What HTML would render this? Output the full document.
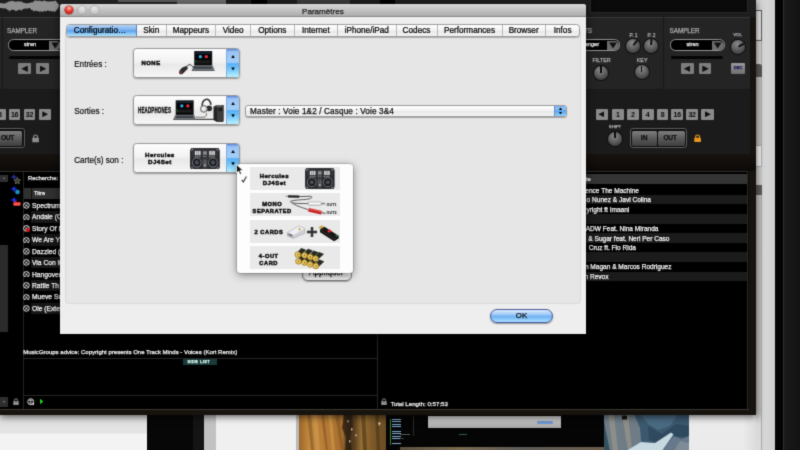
<!DOCTYPE html>
<html><head><meta charset="utf-8">
<style>
*{box-sizing:border-box;margin:0;padding:0}
html,body{width:800px;height:450px;overflow:hidden;background:#000;font-family:"Liberation Sans",sans-serif;}
.a{position:absolute}
.t{position:absolute;white-space:nowrap;line-height:1;-webkit-text-stroke-width:.25px}
#root{position:absolute;left:0;top:0;width:800px;height:450px;overflow:hidden;background:#000;filter:url(#gb)}
#app{left:0;top:0;width:755.5px;height:415.3px;background:#17130f;overflow:hidden;box-shadow:0 2px 7px rgba(0,0,0,.6)}
.lb{color:#ababab;font-size:6.3px;}
.knob{position:absolute;width:14px;height:14px;border-radius:50%;background:radial-gradient(circle at 45% 30%,#8a8a8a 0%,#555 55%,#2a2a2a 100%);box-shadow:0 0 0 1px #0e0e0e}
.knob i{position:absolute;left:6.2px;top:0.3px;width:1.7px;height:6.4px;background:#0c0c0c;transform-origin:50% 6.7px}
.sq{position:absolute;height:11px;width:11.8px;background:#8a8a8a;color:#0a0a0a;font-size:7px;font-weight:bold;text-align:center;line-height:11.6px;border-radius:1px;letter-spacing:-.2px}
.rt{color:#f2f2f2}
#dlg{left:60px;top:4px;width:526.2px;height:329.6px;background:#eeeeee;box-shadow:0 3px 10px rgba(0,0,0,.6);border-radius:3px 3px 0 0;overflow:hidden}
#tb{left:0;top:0;width:527px;height:12.8px;background:linear-gradient(#d8d8d8,#acacac);border-bottom:1px solid #8a8a8a}
.tl{position:absolute;top:2.1px;width:8.2px;height:8.2px;border-radius:50%}
.tab{position:absolute;top:0;height:100%;font-size:8.2px;color:#000;-webkit-text-stroke:.22px #000;text-align:center;line-height:12px;border-right:1px solid #b8b8b8;white-space:nowrap}
.dd{position:absolute;left:72.9px;width:107px;height:30px;border:1px solid #999;border-radius:3.5px;background:linear-gradient(#fdfdfd,#f2f2f2 45%,#e8e8e8 55%,#f6f6f6);box-shadow:0 1px 1.5px rgba(0,0,0,.35);overflow:hidden}
.dd .ar{position:absolute;right:0;top:0;width:13px;height:100%;background:linear-gradient(#5a84d4 0,#9ac4f4 10%,#a2cef8 47%,#56b0f6 53%,#7cccfc 76%,#bcf0ff 100%);border-left:1px solid #86aee0}
.up{position:absolute;left:3.7px;width:0;height:0;border-left:2.4px solid transparent;border-right:2.4px solid transparent}
.dl{position:absolute;color:#111;-webkit-text-stroke:.2px #111;font-size:8.15px;left:14.2px;white-space:nowrap;line-height:1}
.blk{position:absolute;font-weight:bold;color:#111;white-space:nowrap;line-height:1;text-align:center}
.mi{position:absolute;left:12.5px;width:90px;height:23.3px;background:#e9e9e9}
</style></head><body><svg width="0" height="0" style="position:absolute"><filter id="gb" x="0" y="0" width="100%" height="100%" color-interpolation-filters="sRGB"><feConvolveMatrix order="3" kernelMatrix="1 5 1 5 25 5 1 5 1" divisor="49" edgeMode="duplicate" preserveAlpha="true"/></filter></svg><div id="root">
<div class="a" style="left:755px;top:0;width:20px;height:450px;background:linear-gradient(90deg,#cfcfcf,#d6d6d6 60%,#cdcdcd)"></div>
<div class="a" style="left:755px;top:77px;width:6.5px;height:373px;background:linear-gradient(#bcbcbc 0,#bcbcbc 90%,#d8d8d8 93%,#dcdcdc 100%)"></div>
<div class="a" style="left:761.3px;top:40px;width:1px;height:410px;background:#a8a8a8"></div>
<div class="a" style="left:755px;top:10px;width:7.2px;height:30.7px;background:#e2e2e2;border:1px solid #5a5a5a;border-left:0"></div>
<div class="a" style="left:755px;top:64px;width:6.8px;height:13px;background:#565656;border-radius:0 3px 0 0"></div>
<div class="a" style="left:755px;top:145px;width:6.8px;height:22px;background:#ececec;border:1px solid #aaa;border-left:0"></div>
<div class="a" style="left:755px;top:167px;width:6.5px;height:18px;background:#c8c8c8"></div>
<div class="a" style="left:755px;top:185px;width:6.5px;height:10px;background:#5a5a5a"></div>
<div class="a" style="left:775px;top:0;width:25px;height:450px;background:#040404"></div>
<div class="a" style="left:783px;top:0;width:17px;height:450px;background:linear-gradient(90deg,#1a1a1a,#121212);border-left:1px solid #2a3232"></div>
<div class="a" style="left:0;top:410px;width:147px;height:40px;background:linear-gradient(#dcdcdc 0,#e2e2e2 40%,#e5e5e5 58%,#f3f3f3 60%,#f3f3f3 100%)"></div>
<div class="a" style="left:147px;top:410px;width:57px;height:40px;background:#070707"></div>
<div class="a" style="left:193px;top:410px;width:11px;height:40px;background:#141414"></div>
<div class="a" style="left:204px;top:410px;width:12px;height:40px;background:#c2c2c2"></div>
<div class="a" style="left:216px;top:410px;width:81px;height:40px;background:#f0f0f0"></div>
<div class="a" style="left:296px;top:410px;width:3.3px;height:40px;background:#b8b8b8"></div>
<svg class="a" style="left:299.3px;top:414px;filter:blur(.5px)" width="87" height="37" viewBox="0 0 87 37"><defs><linearGradient id="rk" x1="0" x2="1" y1="0" y2="0"><stop offset="0" stop-color="#9a6628"/><stop offset=".12" stop-color="#c48a40"/><stop offset=".3" stop-color="#b67a34"/><stop offset=".5" stop-color="#a8702e"/><stop offset=".56" stop-color="#3e2c18"/><stop offset=".64" stop-color="#5a4022"/><stop offset=".72" stop-color="#9a7034"/><stop offset=".85" stop-color="#7a5828"/><stop offset="1" stop-color="#6a4c24"/></linearGradient></defs><rect width="87" height="37" fill="url(#rk)"/><path d="M8 0l4 37h3L12 0zM22 0l5 37h2L25 0zM36 0l6 37h3L40 0z" fill="#7a5224" opacity=".55"/><path d="M14 0l3 37h4L18 0zM29 0l4 37h3L33 0z" fill="#d4a258" opacity=".5"/><path d="M45 0l-2 14 4 10-1 13h7l-2-14 3-10-1-13z" fill="#2e2012" opacity=".8"/><path d="M62 0l2 37h4L66 0zM76 0l2 37h3L80 0z" fill="#4a3418" opacity=".6"/><path d="M48 6l2 1-1 2zM52 14l2 1-2 2zM56 20l2 1-1 2zM79 8l3 1-2 3zM50 26l2 1-2 2z" fill="#e8e0d0" opacity=".8"/></svg>
<div class="a" style="left:386px;top:410px;width:219px;height:40px;background:#050505"></div>
<div class="a" style="left:391.5px;top:418.5px;width:9px;height:26.5px;background:repeating-linear-gradient(#7fa6c8 0 .9px,#06080c .9px 2.4px)"></div>
<div class="a" style="left:390px;top:418.5px;width:1px;height:26.5px;background:#3a7a2a"></div>
<div class="a" style="left:413px;top:416px;width:1px;height:20px;background:#2a2a2a"></div>
<div class="a" style="left:428px;top:416px;width:133px;height:11.5px;background:linear-gradient(#d2d2d2,#a6a6a6)"></div>
<div class="a" style="left:537px;top:421.3px;width:15.5px;height:2.4px;border-radius:1.2px;background:#6c98d2"></div>
<div class="a" style="left:459px;top:433.5px;width:7.5px;height:1.5px;background:#2a5a5c"></div>
<div class="a" style="left:400px;top:433.5px;width:10px;height:1px;background:#555"></div>
<div class="a" style="left:400px;top:437.5px;width:4px;height:1px;background:#444"></div>
<div class="a" style="left:400px;top:446.5px;width:205px;height:3.5px;background:linear-gradient(90deg,#5a5040,#7a6a50 30%,#5c5a58 60%,#6a5c48)"></div>
<svg class="a" style="left:604.3px;top:414px;filter:blur(.5px)" width="85" height="37" viewBox="0 0 85 37"><rect width="85" height="37" fill="#3c586e"/><path d="M0 0h30l6 14 2 23H0z" fill="#6f7c86"/><path d="M4 0l5 37h5L10 0zM18 0l6 37h4L24 0z" fill="#98958a" opacity=".7"/><path d="M0 8l6 29H0z" fill="#34505f"/><path d="M36 0l8 10 10 6 12-4 8-12z" fill="#4a6a82"/><path d="M44 12l14 8 14-10 13 2v12l-14-2-12 8-14-4z" fill="#2f4a5e"/><path d="M22 37l15-9 14 1 16-10.5 2.5 2L58 37z" fill="#c6d8e0"/><path d="M58 37l11.5-15 8 3 7.5-3v15z" fill="#66788a"/><path d="M70 37l6-10 9 2v8z" fill="#8a949a" opacity=".7"/><rect x="18" y="1.5" width="5" height="4" fill="#111"/></svg>
<div class="a" style="left:689.3px;top:410px;width:67px;height:40px;background:linear-gradient(90deg,#ebebeb 0,#ebebeb 80%,#dcdcdc 100%)"></div>
<div id="app" class="a">
<div class="a" style="left:0;top:0;width:756px;height:16.5px;background:#1d1d1d"></div>
<svg class="a" style="left:0;top:0" width="64" height="12" viewBox="0 0 64 12"><path d="M0 3.3 L1.2 3.1 L2.4 3.2 L3.6 3.5 L4.8 3.5 L6 2.8 L7.2 2.5 L8.4 1.8 L9.6 1.2 L10.8 1.3 L12 0.8 L13.2 0.9 L14.4 1.8 L15.6 1.6 L16.8 1.7 L18 1.2 L19.2 1.3 L20.4 1.9 L21.6 1.1 L22.8 2.8 L24 2.7 L25.2 3 L26.4 3.4 L27.6 3.2 L28.8 3 L30 2.9 L31.2 2.2 L32.4 2.4 L33.6 1.6 L34.8 0.6 L36 0.5 L37.2 0.7 L38.4 0.9 L39.6 0.6 L40.8 1 L42 1.5 L43.2 0.8 L44.4 0.6 L45.6 1.1 L46.8 1.6 L48 1.4 L49.2 1.5 L50.4 1.4 L51.6 1.1 L52.8 1.5 L54 0.9 L55.2 0.6 L56.4 1.7 L57.6 3.2 L58.8 4.6 L58.8 6.5 L57.6 9 L56.4 10.2 L55.2 11.8 L54 11.8 L52.8 10.9 L51.6 11.8 L50.4 10.4 L49.2 11.6 L48 10.1 L46.8 10.9 L45.6 11.4 L44.4 10.5 L43.2 12.1 L42 11.4 L40.8 11.3 L39.6 12 L38.4 10.9 L37.2 11.2 L36 10.6 L34.8 11.1 L33.6 11.4 L32.4 9.7 L31.2 10.1 L30 7.9 L28.8 8.1 L27.6 8.8 L26.4 8.5 L25.2 8.6 L24 8.8 L22.8 9.2 L21.6 10.4 L20.4 9.9 L19.2 9.6 L18 10.3 L16.8 10.7 L15.6 11.2 L14.4 9.8 L13.2 10.1 L12 9.6 L10.8 10.3 L9.6 11.5 L8.4 10 L7.2 9.8 L6 8.6 L4.8 8.3 L3.6 8.4 L2.4 8.2 L1.2 7.9 L0 8Z" fill="#8e8e8e"/></svg>
<div class="a" style="left:60px;top:0;width:166px;height:4px;background:#242424"></div>
<div class="a" style="left:118px;top:0;width:60px;height:1.5px;background:#5a5a5a"></div>
<div class="a" style="left:177px;top:0;width:49px;height:3.6px;background:#6a6a6a"></div>
<div class="a" style="left:251px;top:0;width:16px;height:4px;background:#000"></div>
<div class="a" style="left:297px;top:0;width:53px;height:4px;background:#3a3a3a"></div>
<div class="a" style="left:380px;top:0;width:15px;height:4px;background:#000"></div>
<div class="a" style="left:590px;top:0;width:158px;height:12.5px;background:#0a0a0a;border:1px solid #262626;border-top:0"></div>
<div class="a" style="left:0;top:16.5px;width:749.5px;height:137.5px;background:#242424;border-top:1px solid #383838"></div>
<div class="a" style="left:0;top:89px;width:749.5px;height:1px;background:#191919"></div>
<div class="a" style="left:0;top:90px;width:749.5px;height:64px;background:#1b1b1b"></div>
<div class="a" style="left:0;top:153.5px;width:749.5px;height:1px;background:#3a3a3a"></div>
<div class="a" style="left:663px;top:17px;width:1px;height:72px;background:#191919"></div>
<div class="a" style="left:2px;top:17px;width:1px;height:72px;background:#191919"></div>
<div class="a" style="left:0;top:154px;width:756px;height:17px;background:linear-gradient(#17130f,#0c0a08)"></div>
<div class="t lb" style="left:7px;top:27.8px">SAMPLER</div>
<div class="a" style="left:7.5px;top:39.3px;width:60px;height:11.8px;background:#000;border:1.1px solid #939393;border-radius:5.5px"></div>
<div class="t" style="left:24px;top:42.3px;color:#f0f0f0;font-size:5.6px">siren</div>
<div class="a" style="left:49px;top:40.5px;width:12.2px;height:9.5px;background:#6c6c6c;border-radius:0 4.5px 4.5px 0"></div>
<div class="a" style="left:51.3px;top:42.4px;width:7.8px;height:6.2px;background:#111;clip-path:polygon(0 0,100% 0,50% 100%)"></div>
<div class="a" style="left:8.5px;top:55.8px;width:51.5px;height:3.6px;background:#050505;border-radius:1.8px"></div>
<div class="a" style="left:18.4px;top:63.3px;width:12.8px;height:11px;background:#7d7d7d;border-radius:1px"></div>
<div class="a" style="left:21.3px;top:65.5px;width:6.5px;height:6.6px;background:#111;clip-path:polygon(100% 0,100% 100%,0 50%)"></div>
<div class="a" style="left:36.1px;top:63.3px;width:12.8px;height:11px;background:#7d7d7d;border-radius:1px"></div>
<div class="a" style="left:39.8px;top:65.5px;width:6.5px;height:6.6px;background:#111;clip-path:polygon(0 0,0 100%,100% 50%)"></div>
<div class="t lb" style="left:669.5px;top:27.8px">SAMPLER</div>
<div class="a" style="left:670px;top:39.3px;width:54.5px;height:11.8px;background:#000;border:1.1px solid #939393;border-radius:5.5px"></div>
<div class="t" style="left:686.5px;top:42.3px;color:#f0f0f0;font-size:5.6px">siren</div>
<div class="a" style="left:711.5px;top:40.5px;width:12.2px;height:9.5px;background:#6c6c6c;border-radius:0 4.5px 4.5px 0"></div>
<div class="a" style="left:713.8px;top:42.4px;width:7.8px;height:6.2px;background:#111;clip-path:polygon(0 0,100% 0,50% 100%)"></div>
<div class="a" style="left:671px;top:55.8px;width:51.5px;height:3.6px;background:#050505;border-radius:1.8px"></div>
<div class="a" style="left:680.9px;top:63.3px;width:12.8px;height:11px;background:#7d7d7d;border-radius:1px"></div>
<div class="a" style="left:683.8px;top:65.5px;width:6.5px;height:6.6px;background:#111;clip-path:polygon(100% 0,100% 100%,0 50%)"></div>
<div class="a" style="left:698.6px;top:63.3px;width:12.8px;height:11px;background:#7d7d7d;border-radius:1px"></div>
<div class="a" style="left:702.3px;top:65.5px;width:6.5px;height:6.6px;background:#111;clip-path:polygon(0 0,0 100%,100% 50%)"></div>
<div class="sq" style="left:-6px;top:108.7px">8</div>
<div class="sq" style="left:8.7px;top:108.7px">16</div>
<div class="sq" style="left:23.6px;top:108.7px">32</div>
<div class="sq" style="left:38.7px;top:108.7px;width:12.2px"></div>
<div class="a" style="left:42.300000000000004px;top:111.2px;width:5.8px;height:6px;background:#111;clip-path:polygon(0 0,0 100%,100% 50%)"></div>
<div class="sq" style="left:595.6px;top:108.7px;width:12.2px"></div>
<div class="a" style="left:598.4px;top:111.2px;width:5.8px;height:6px;background:#111;clip-path:polygon(100% 0,100% 100%,0 50%)"></div>
<div class="sq" style="left:612px;top:108.7px">1</div>
<div class="sq" style="left:627px;top:108.7px">2</div>
<div class="sq" style="left:641.8px;top:108.7px">4</div>
<div class="sq" style="left:656.7px;top:108.7px">8</div>
<div class="sq" style="left:671.4px;top:108.7px">16</div>
<div class="sq" style="left:686.2px;top:108.7px">32</div>
<div class="sq" style="left:701.4px;top:108.7px;width:12.2px"></div>
<div class="a" style="left:705px;top:111.2px;width:5.8px;height:6px;background:#111;clip-path:polygon(0 0,0 100%,100% 50%)"></div>
<div class="a" style="left:-33px;top:128px;width:57.5px;height:20px;border:1px solid #5a5a5a;border-radius:3px;background:#101010"></div>
<div class="a" style="left:-30.5px;top:130.5px;width:25.3px;height:15px;background:linear-gradient(#7e7e7e,#5a5a5a 50%,#3e3e3e);border-radius:1.5px"></div>
<div class="a" style="left:-4.5px;top:130.5px;width:26.5px;height:15px;background:linear-gradient(#7e7e7e,#5a5a5a 50%,#3e3e3e);border-radius:1.5px"></div>
<div class="t" style="left:-21.700000000000045px;top:134.8px;color:#111;font-size:6.6px;font-weight:bold">IN</div>
<div class="t" style="left:1.1000000000000227px;top:134.8px;color:#111;font-size:6.6px;font-weight:bold;letter-spacing:-.35px">OUT</div>
<div class="a" style="left:629.5px;top:128px;width:57.5px;height:20px;border:1px solid #5a5a5a;border-radius:3px;background:#101010"></div>
<div class="a" style="left:632px;top:130.5px;width:25.3px;height:15px;background:linear-gradient(#7e7e7e,#5a5a5a 50%,#3e3e3e);border-radius:1.5px"></div>
<div class="a" style="left:658px;top:130.5px;width:26.5px;height:15px;background:linear-gradient(#7e7e7e,#5a5a5a 50%,#3e3e3e);border-radius:1.5px"></div>
<div class="t" style="left:640.8px;top:134.8px;color:#111;font-size:6.6px;font-weight:bold">IN</div>
<div class="t" style="left:663.6px;top:134.8px;color:#111;font-size:6.6px;font-weight:bold;letter-spacing:-.35px">OUT</div>
<svg class="a" style="left:32px;top:134px" width="7.2" height="8.6" viewBox="0 0 15 18"><path d="M3.5 8.5V6a4 4 0 0 1 8 0v2.5" fill="none" stroke="#8e8e8e" stroke-width="2.4"/><rect x="0.5" y="8" width="14" height="9.5" rx="1" fill="#8e8e8e"/></svg>
<svg class="a" style="left:694.2px;top:133.8px" width="7.2" height="8.6" viewBox="0 0 15 18"><path d="M3.5 8.5V6a4 4 0 0 1 8 0v2.5" fill="none" stroke="#ea951e" stroke-width="2.4"/><rect x="0.5" y="8" width="14" height="9.5" rx="1" fill="#ea951e"/></svg>
<div class="t lb" style="right:163.5px;top:27.8px">ECTS</div>
<div class="a" style="left:566px;top:39.3px;width:54px;height:11.8px;background:#000;border:1.1px solid #939393;border-radius:5.5px"></div>
<div class="t" style="right:156.5px;top:42.3px;color:#f0f0f0;font-size:5.6px">anger</div>
<div class="a" style="left:606.8px;top:40.5px;width:12.2px;height:9.5px;background:#6c6c6c;border-radius:0 4.5px 4.5px 0"></div>
<div class="a" style="left:609.1px;top:42.4px;width:7.8px;height:6.2px;background:#111;clip-path:polygon(0 0,100% 0,50% 100%)"></div>
<div class="t lb" style="left:629.5px;top:33.6px;font-size:4.9px">P. 1</div>
<div class="t lb" style="left:647.5px;top:33.6px;font-size:4.9px">P. 2</div>
<div class="knob" style="left:626px;top:38.8px"><i style="transform:rotate(38deg)"></i></div>
<div class="knob" style="left:644px;top:38.8px"><i style="transform:rotate(5deg)"></i></div>
<div class="t lb" style="left:592.5px;top:58.3px;font-size:5.4px">FILTER</div>
<div class="knob" style="left:594px;top:66px"><i></i></div>
<div class="t lb" style="left:636.7px;top:58.3px;font-size:5.4px">KEY</div>
<div class="knob" style="left:634.6px;top:65.3px"><i></i></div>
<div class="t lb" style="left:733.2px;top:33.4px;font-size:4.4px">VOL</div>
<div class="knob" style="left:731px;top:39.8px"><i style="transform:rotate(62deg)"></i></div>
<div class="a" style="left:731px;top:62.5px;width:13.5px;height:11.3px;background:linear-gradient(#9a9a9a,#707070);border-radius:1px"></div>
<div class="t" style="left:733.8px;top:66.2px;color:#1a1a60;font-size:4.2px;font-weight:bold">DEC</div>
<div class="t lb" style="left:608.8px;top:125px;font-size:4.3px">SHIFT</div>
<div class="knob" style="left:608px;top:131.7px"><i></i></div>
<div class="a" style="left:0;top:170.5px;width:749px;height:238.5px;background:#000;border-top:1px solid #2e2e2e"></div>
<div class="a" style="left:0;top:174.5px;width:8px;height:7px;background:#2f2f2f"></div>
<div class="a" style="left:2.6px;top:177.2px;width:3px;height:2.2px;background:#777;clip-path:polygon(0 100%,100% 100%,50% 0)"></div>
<div class="a" style="left:0;top:245px;width:8px;height:86.5px;background:#2b2b2b"></div>
<svg class="a" style="left:9.5px;top:172.5px" width="12" height="35" viewBox="0 0 24 70"><path d="M14.5 9 l2 4.2 4.5 .6 -3.3 3.2 .8 4.5 -4-2.2 -4 2.2 .8-4.5 -3.3-3.2 4.5-.6z" fill="#3a3a30" stroke="#8c8878" stroke-width="1.3"/><path d="M8 3v10M3 8h10" stroke="#28309a" stroke-width="2.8"/><circle cx="15" cy="38" r="4.6" fill="#1f9fd0"/><path d="M12 36q3 2 6-1M13 41q2-3 5-1" stroke="#0b5a86" stroke-width="1" fill="none"/><path d="M8 27v10M3 32h10" stroke="#1d35ff" stroke-width="2.8"/><path d="M7 56h5l1.5 2H21v7H7z" fill="#e02222"/><path d="M7 60h14l-1 5H7z" fill="#ff5a4a"/><path d="M8 49v10M3 54h10" stroke="#1d35ff" stroke-width="2.8"/></svg>
<div class="a" style="left:22.5px;top:171.5px;width:1px;height:237px;background:#242424"></div>
<div class="t" style="left:28px;top:176.4px;color:#f0f0f0;font-size:5.9px">Recherche:</div>
<div class="a" style="left:24px;top:188px;width:40px;height:11px;background:#303030"></div>
<div class="a" style="left:30.8px;top:188px;width:1px;height:11px;background:#111"></div>
<div class="t" style="left:34px;top:190.8px;color:#f0f0f0;font-size:5.7px">Titre</div>
<svg class="a" style="left:22.8px;top:202.2px" width="6.8" height="6.8" viewBox="0 0 14 14"><circle cx="7" cy="7" r="6" fill="#111" stroke="#e8e8e8" stroke-width="1.8"/><circle cx="7" cy="7" r="1.5" fill="#e8e8e8"/><path d="M7 1v3.5M7 9.5V13M1 7h3.5M9.5 7H13" stroke="#e8e8e8" stroke-width="1.6" transform="rotate(40 7 7)"/></svg>
<div class="t rt" style="left:32px;top:203px;font-size:6.7px">Spectrum</div>
<div class="a" style="left:31px;top:211.4px;width:32px;height:11.4px;background:#171717"></div>
<svg class="a" style="left:22.8px;top:213.6px" width="6.8" height="6.8" viewBox="0 0 14 14"><circle cx="7" cy="7" r="6" fill="#111" stroke="#e8e8e8" stroke-width="1.8"/><circle cx="7" cy="7" r="1.5" fill="#e8e8e8"/><path d="M7 1v3.5M7 9.5V13M1 7h3.5M9.5 7H13" stroke="#e8e8e8" stroke-width="1.6" transform="rotate(40 7 7)"/></svg>
<div class="t rt" style="left:32px;top:214.4px;font-size:6.7px">Andale (C</div>
<svg class="a" style="left:22.8px;top:225px" width="6.8" height="6.8" viewBox="0 0 14 14"><circle cx="7" cy="7" r="6" fill="#111" stroke="#e8e8e8" stroke-width="1.8"/><circle cx="7" cy="7" r="1.5" fill="#e8e8e8"/><path d="M7 1v3.5M7 9.5V13M1 7h3.5M9.5 7H13" stroke="#e8e8e8" stroke-width="1.6" transform="rotate(40 7 7)"/></svg>
<div class="a" style="left:26.4px;top:227.8px;width:4px;height:4px;border-radius:50%;background:#e01010"></div>
<div class="t rt" style="left:32px;top:225.8px;font-size:6.7px">Story Of M</div>
<div class="a" style="left:31px;top:234.3px;width:32px;height:11.4px;background:#171717"></div>
<svg class="a" style="left:22.8px;top:236.5px" width="6.8" height="6.8" viewBox="0 0 14 14"><circle cx="7" cy="7" r="6" fill="#111" stroke="#e8e8e8" stroke-width="1.8"/><circle cx="7" cy="7" r="1.5" fill="#e8e8e8"/><path d="M7 1v3.5M7 9.5V13M1 7h3.5M9.5 7H13" stroke="#e8e8e8" stroke-width="1.6" transform="rotate(40 7 7)"/></svg>
<div class="t rt" style="left:32px;top:237.3px;font-size:6.7px">We Are Y</div>
<svg class="a" style="left:22.8px;top:247.9px" width="6.8" height="6.8" viewBox="0 0 14 14"><circle cx="7" cy="7" r="6" fill="#111" stroke="#e8e8e8" stroke-width="1.8"/><circle cx="7" cy="7" r="1.5" fill="#e8e8e8"/><path d="M7 1v3.5M7 9.5V13M1 7h3.5M9.5 7H13" stroke="#e8e8e8" stroke-width="1.6" transform="rotate(40 7 7)"/></svg>
<div class="t rt" style="left:32px;top:248.7px;font-size:6.7px">Dazzled (</div>
<div class="a" style="left:31px;top:257.1px;width:32px;height:11.4px;background:#171717"></div>
<svg class="a" style="left:22.8px;top:259.3px" width="6.8" height="6.8" viewBox="0 0 14 14"><circle cx="7" cy="7" r="6" fill="#111" stroke="#e8e8e8" stroke-width="1.8"/><circle cx="7" cy="7" r="1.5" fill="#e8e8e8"/><path d="M7 1v3.5M7 9.5V13M1 7h3.5M9.5 7H13" stroke="#e8e8e8" stroke-width="1.6" transform="rotate(40 7 7)"/></svg>
<div class="t rt" style="left:32px;top:260.1px;font-size:6.7px">Via Con M</div>
<svg class="a" style="left:22.8px;top:270.7px" width="6.8" height="6.8" viewBox="0 0 14 14"><circle cx="7" cy="7" r="6" fill="#111" stroke="#e8e8e8" stroke-width="1.8"/><circle cx="7" cy="7" r="1.5" fill="#e8e8e8"/><path d="M7 1v3.5M7 9.5V13M1 7h3.5M9.5 7H13" stroke="#e8e8e8" stroke-width="1.6" transform="rotate(40 7 7)"/></svg>
<div class="t rt" style="left:32px;top:271.5px;font-size:6.7px">Hangover</div>
<div class="a" style="left:31px;top:279.9px;width:32px;height:11.4px;background:#171717"></div>
<svg class="a" style="left:22.8px;top:282.1px" width="6.8" height="6.8" viewBox="0 0 14 14"><circle cx="7" cy="7" r="6" fill="#111" stroke="#e8e8e8" stroke-width="1.8"/><circle cx="7" cy="7" r="1.5" fill="#e8e8e8"/><path d="M7 1v3.5M7 9.5V13M1 7h3.5M9.5 7H13" stroke="#e8e8e8" stroke-width="1.6" transform="rotate(40 7 7)"/></svg>
<div class="t rt" style="left:32px;top:282.9px;font-size:6.7px">Rattle Th</div>
<svg class="a" style="left:22.8px;top:293.6px" width="6.8" height="6.8" viewBox="0 0 14 14"><circle cx="7" cy="7" r="6" fill="#111" stroke="#e8e8e8" stroke-width="1.8"/><circle cx="7" cy="7" r="1.5" fill="#e8e8e8"/><path d="M7 1v3.5M7 9.5V13M1 7h3.5M9.5 7H13" stroke="#e8e8e8" stroke-width="1.6" transform="rotate(40 7 7)"/></svg>
<div class="t rt" style="left:32px;top:294.4px;font-size:6.7px">Mueve Su</div>
<div class="a" style="left:31px;top:302.8px;width:32px;height:11.4px;background:#171717"></div>
<svg class="a" style="left:22.8px;top:305px" width="6.8" height="6.8" viewBox="0 0 14 14"><circle cx="7" cy="7" r="6" fill="#111" stroke="#e8e8e8" stroke-width="1.8"/><circle cx="7" cy="7" r="1.5" fill="#e8e8e8"/><path d="M7 1v3.5M7 9.5V13M1 7h3.5M9.5 7H13" stroke="#e8e8e8" stroke-width="1.6" transform="rotate(40 7 7)"/></svg>
<div class="t rt" style="left:32px;top:305.8px;font-size:6.7px">Ole (Exte</div>
<div class="t" style="left:23.2px;top:349px;color:#f4f4f4;font-size:6.03px">MusicGroups advice: Copyright presents One Track Minds - Voices (Kort Remix)</div>
<div class="a" style="left:23px;top:357.5px;width:354px;height:1px;background:#262626"></div>
<div class="a" style="left:183px;top:358.5px;width:33.5px;height:6px;background:#1b3a3c"></div>
<div class="t" style="left:187.5px;top:359.8px;color:#dfe;font-size:3.9px;font-weight:bold;letter-spacing:.45px">SIDE LIST</div>
<div class="a" style="left:23px;top:395.3px;width:354px;height:1px;background:#262626"></div>
<div class="a" style="left:376.8px;top:334px;width:1px;height:75px;background:#242424"></div>
<div class="a" style="left:0;top:396.5px;width:8px;height:10.5px;background:#2e2e2e"></div>
<div class="a" style="left:2.3px;top:400.6px;width:3.4px;height:2.5px;background:#777;clip-path:polygon(0 0,100% 0,50% 100%)"></div>
<svg class="a" style="left:13.3px;top:398px" width="6" height="7.2" viewBox="0 0 15 18"><path d="M3.5 8.5V6a4 4 0 0 1 8 0v2.5" fill="none" stroke="#8e8e8e" stroke-width="2.4"/><rect x="0.5" y="8" width="14" height="9.5" rx="1" fill="#8e8e8e"/></svg>
<svg class="a" style="left:381px;top:397.8px" width="6" height="7.2" viewBox="0 0 15 18"><path d="M3.5 8.5V6a4 4 0 0 1 8 0v2.5" fill="none" stroke="#8e8e8e" stroke-width="2.4"/><rect x="0.5" y="8" width="14" height="9.5" rx="1" fill="#8e8e8e"/></svg>
<svg class="a" style="left:26.6px;top:397.8px" width="8" height="8" viewBox="0 0 16 16"><circle cx="7.5" cy="7.5" r="6" fill="none" stroke="#d8d8d8" stroke-width="1.8"/><path d="M3 5h9M3 10h9M7.5 1.5v12" stroke="#d8d8d8" stroke-width="1.3" fill="none"/><path d="M10 11l5 0-2.5 4z" fill="#eee"/></svg>
<div class="a" style="left:40px;top:398.8px;width:3.4px;height:5.4px;background:#22d022;clip-path:polygon(0 0,0 100%,100% 50%)"></div>
<div class="t" style="left:390.7px;top:400.5px;color:#f0f0f0;font-size:6.14px">Total Length: 0:57:53</div>
<div class="a" style="left:560px;top:174px;width:186.5px;height:9.8px;background:#343434"></div>
<div class="t" style="left:586px;top:176.7px;color:#f0f0f0;font-size:5.8px">te</div>
<div class="t" style="right:116.5px;top:187.6px;color:#f4f4f4;font-size:6.55px">ence The Machine</div>
<div class="a" style="left:560px;top:194.9px;width:186.5px;height:9.6px;background:#1b1b1b"></div>
<div class="t" style="right:104.5px;top:197.2px;color:#f4f4f4;font-size:6.55px">o Nunez &amp; Javi Colina</div>
<div class="t" style="right:126.2px;top:206.8px;color:#f4f4f4;font-size:6.55px">yright ft Imaani</div>
<div class="a" style="left:560px;top:214.1px;width:186.5px;height:9.6px;background:#1b1b1b"></div>
<div class="t" style="right:97px;top:226px;color:#f4f4f4;font-size:6.55px">ADW Feat. Nina Miranda</div>
<div class="a" style="left:560px;top:233.2px;width:186.5px;height:9.6px;background:#1b1b1b"></div>
<div class="t" style="right:86px;top:235.6px;color:#f4f4f4;font-size:6.55px">&amp; Sugar feat. Neri Per Caso</div>
<div class="t" style="right:119.5px;top:245.1px;color:#f4f4f4;font-size:6.55px">Cruz ft. Flo Rida</div>
<div class="a" style="left:560px;top:252.4px;width:186.5px;height:9.6px;background:#1b1b1b"></div>
<div class="t" style="right:84px;top:264.3px;color:#f4f4f4;font-size:6.55px">n Magan &amp; Marcos Rodriguez</div>
<div class="a" style="left:560px;top:271.6px;width:186.5px;height:9.6px;background:#1b1b1b"></div>
<div class="t" style="right:147px;top:273.9px;color:#f4f4f4;font-size:6.55px">n Revox</div>
<div class="a" style="left:746.5px;top:171px;width:2.5px;height:238px;background:#0a0a0a;border-left:1px solid #2a2a2a"></div>
<div class="a" style="left:0;top:408.5px;width:749px;height:1px;background:#3a352e"></div>
</div>
<div id="dlg" class="a">
<div id="tb" class="a"></div>
<div class="tl" style="left:5.3px;background:radial-gradient(circle at 50% 28%,#ffb8b0 0,#ea3a30 45%,#a81510 100%);box-shadow:0 0 0 .6px #7a1a14"></div>
<div class="tl" style="left:17.8px;background:radial-gradient(circle at 50% 30%,#e6e6e6 0,#cacaca 60%,#b0b0b0 100%);box-shadow:0 0 0 .6px #979797"></div>
<div class="tl" style="left:30.4px;background:radial-gradient(circle at 50% 30%,#e6e6e6 0,#cacaca 60%,#b0b0b0 100%);box-shadow:0 0 0 .6px #979797"></div>
<div class="t" style="left:242px;top:3.7px;font-size:8.1px;color:#222">Paramètres</div>
<div class="a" style="left:4.6px;top:26px;width:516.6px;height:273.6px;background:#e6e6e6;border:1px solid #dadada;border-radius:3px"></div>
<div class="a" style="left:6px;top:20.1px;width:513.5px;height:13px;border:1px solid #9c9c9c;border-radius:3.5px;background:linear-gradient(#ffffff,#f2f2f2 50%,#e6e6e6 52%,#f4f4f4);box-shadow:0 1px 1px rgba(0,0,0,.25);overflow:hidden">
<div class="tab" style="left:-1px;width:71px;background:linear-gradient(#b4d2f4 0,#7fb4ee 42%,#5fa4ea 52%,#80c0f4 75%,#b4e4fc 100%);border-right:1px solid #5a80b8;padding-right:2px;">Configuratio…</div>
<div class="tab" style="left:70px;width:29.5px;">Skin</div>
<div class="tab" style="left:99.5px;width:49.8px;">Mappeurs</div>
<div class="tab" style="left:149.3px;width:34.7px;">Video</div>
<div class="tab" style="left:184px;width:43.6px;">Options</div>
<div class="tab" style="left:227.6px;width:43.4px;">Internet</div>
<div class="tab" style="left:271px;width:58.5px;">iPhone/iPad</div>
<div class="tab" style="left:329.5px;width:41px;">Codecs</div>
<div class="tab" style="left:370.5px;width:65px;">Performances</div>
<div class="tab" style="left:435.5px;width:43.3px;">Browser</div>
<div class="tab" style="left:478.8px;width:33.7px;border-right:0;">Infos</div>
</div>
<div class="dl" style="top:57.4px">Entrées :</div>
<div class="dl" style="top:104.3px">Sorties :</div>
<div class="dl" style="top:152.5px">Carte(s) son :</div>
<div class="dd" style="top:44.2px"><div class="blk" style="left:7.5px;top:11.5px;font-size:5.9px;letter-spacing:.55px;-webkit-text-stroke:.5px #111">NONE</div><svg class="a" style="left:42px;top:0" width="44" height="29" viewBox="0 0 44 29"><g transform="translate(15.8 2) scale(0.95)"><path d="M2.5 0h19v15.5h-19z" fill="#26282c"/><path d="M3.3 .8h17.4v13.9H3.3z" fill="#060606"/><rect x="3.8" y="1.3" width="16.4" height="1.6" fill="#16283a"/><circle cx="9" cy="6" r="1.7" fill="#2cb0f0"/><circle cx="15.3" cy="6" r="1.7" fill="#f02c3c"/><rect x="4.5" y="9.5" width="15" height="4" fill="#151515"/><path d="M5 11.5h14" stroke="#333" stroke-width=".6"/><path d="M4.2 9.5v3" stroke="#2a8a3a" stroke-width=".6"/><path d="M1.8 15.5h20.4l1.8 4.5h-24z" fill="#70767c"/><path d="M3.3 16.3h17.4l1 2.4H2.3z" fill="#3c4044"/><path d="M0 20h24v.9H0z" fill="#2a2c30"/></g><path d="M3 23.5c0-2 2-4.5 4.5-5.5l3-1 1.5 2.5-5 5c-1.5 1.5-4 1-4-1z" fill="#2b2b2b"/><path d="M3.8 24.3l2-2" stroke="#c33" stroke-width="1.1"/><path d="M10.5 18c1.5-2.5 3.5-3 5-1.5s1.5 2 3.5 1.5" fill="none" stroke="#222" stroke-width="1"/></svg><div class="ar"><div class="a" style="left:4.3px;top:5.9px;width:3.7px;height:3.2px;background:#000;clip-path:polygon(0 100%,100% 100%,50% 0)"></div><div class="a" style="left:4.3px;top:18.2px;width:3.7px;height:3.2px;background:#000;clip-path:polygon(0 0,100% 0,50% 100%)"></div></div></div>
<div class="dd" style="top:91.1px"><div class="blk" style="left:4.2px;top:10.1px;font-size:8.6px;transform:scaleX(.52);transform-origin:0 0;-webkit-text-stroke:.4px #111;letter-spacing:.3px">HEADPHONES</div><svg class="a" style="left:38px;top:0" width="54" height="29" viewBox="0 0 54 29"><g transform="translate(1.3 4.2) scale(0.95)"><path d="M2.5 0h19v15.5h-19z" fill="#26282c"/><path d="M3.3 .8h17.4v13.9H3.3z" fill="#060606"/><rect x="3.8" y="1.3" width="16.4" height="1.6" fill="#16283a"/><circle cx="9" cy="6" r="1.7" fill="#2cb0f0"/><circle cx="15.3" cy="6" r="1.7" fill="#f02c3c"/><rect x="4.5" y="9.5" width="15" height="4" fill="#151515"/><path d="M5 11.5h14" stroke="#333" stroke-width=".6"/><path d="M4.2 9.5v3" stroke="#2a8a3a" stroke-width=".6"/><path d="M1.8 15.5h20.4l1.8 4.5h-24z" fill="#70767c"/><path d="M3.3 16.3h17.4l1 2.4H2.3z" fill="#3c4044"/><path d="M0 20h24v.9H0z" fill="#2a2c30"/></g><path d="M24 21.2h8c2 0 2.5-1.5 2.5-4" fill="none" stroke="#666" stroke-width=".9"/><path d="M24 23.4h18" stroke="#444" stroke-width="1.1"/><path d="M30.3 10.5C29.5 3.5 37.5 -0.5 39 8.8" fill="none" stroke="#303030" stroke-width="1.5"/><circle cx="37.2" cy="12.3" r="2.9" fill="#2c2c2c"/><circle cx="31.9" cy="12.9" r="3.4" fill="#d8d8d8" stroke="#555" stroke-width=".9"/><circle cx="31.5" cy="12.6" r="1.6" fill="#f4f4f4"/><path d="M41.5 10.5l3.5-1.5h6.5v15.5l-6.5 1.5-3.5-2z" fill="#222"/><path d="M45 9h6.5v17H45z" fill="#3c3c3c"/><path d="M41.5 10.5l3.5-1.5h6.5l-3 1.8z" fill="#6a6a6a"/><rect x="46.3" y="12" width="4" height="3" fill="#1c1c1c"/></svg><div class="ar"><div class="a" style="left:4.3px;top:5.9px;width:3.7px;height:3.2px;background:#000;clip-path:polygon(0 100%,100% 100%,50% 0)"></div><div class="a" style="left:4.3px;top:18.2px;width:3.7px;height:3.2px;background:#000;clip-path:polygon(0 0,100% 0,50% 100%)"></div></div></div>
<div class="dd" style="top:139px"><div class="blk" style="left:5px;top:7.2px;width:42px;font-size:6.2px;line-height:7.1px;-webkit-text-stroke:.5px #111;letter-spacing:.45px">Hercules<br>DJ4Set</div><svg class="a" style="left:56.3px;top:3.8px" width="29.8" height="21.6" viewBox="0 0 32 22" preserveAspectRatio="none"><path d="M1.5 .5h29l1 2v17l-1 2h-29l-1-2v-17z" fill="#2a2c30" stroke="#15161a" stroke-width=".8"/><rect x="2" y="1.5" width="28" height="6.5" fill="#34363a"/><rect x="5.3" y="3" width="6" height="4.3" fill="#e0e0e0"/><path d="M7.3 2.5v5.5M9.3 2.5v5.5" stroke="#555" stroke-width=".7"/><rect x="20.7" y="3" width="6" height="4.3" fill="#e0e0e0"/><path d="M22.7 2.5v5.5M24.7 2.5v5.5" stroke="#555" stroke-width=".7"/><rect x="14" y="3.3" width="4" height="3.5" fill="#8a8c90"/><path d="M5 9h7M20 9h7M14 8.5h4" stroke="#b8b8b8" stroke-width=".9" stroke-dasharray="1.4 .7"/><rect x="13.3" y="9.5" width="5.4" height="11.5" fill="#383a3e"/><path d="M15 12v7M17 12v7" stroke="#888" stroke-width=".7"/><rect x="15.2" y="16.5" width="1.6" height="2.5" fill="#aaa"/><circle cx="7.3" cy="14.8" r="4.7" fill="#1a1c20" stroke="#6a6e74" stroke-width="1.1"/><circle cx="7.3" cy="14.8" r="2.2" fill="#4a4e54"/><circle cx="24.7" cy="14.8" r="4.7" fill="#1a1c20" stroke="#6a6e74" stroke-width="1.1"/><circle cx="24.7" cy="14.8" r="2.2" fill="#4a4e54"/><path d="M1.5 19.5l2 1.5M30.5 19.5l-2 1.5M1.5 2.5l2-1.5M30.5 2.5l-2-1.5" stroke="#c8c8c8" stroke-width=".9"/></svg><div class="ar"><div class="a" style="left:4.3px;top:5.9px;width:3.7px;height:3.2px;background:#000;clip-path:polygon(0 100%,100% 100%,50% 0)"></div><div class="a" style="left:4.3px;top:18.2px;width:3.7px;height:3.2px;background:#000;clip-path:polygon(0 0,100% 0,50% 100%)"></div></div></div>
<div class="a" style="left:184.5px;top:100.5px;width:322.5px;height:12.3px;border:1px solid #9c9c9c;border-radius:3px;background:linear-gradient(#ffffff,#f3f3f3 48%,#e7e7e7 52%,#f4f4f4);box-shadow:0 1px 1px rgba(0,0,0,.3);overflow:hidden"><div class="t" style="left:4.6px;top:2.1px;font-size:8.2px;color:#111;letter-spacing:.125px">Master : Voie 1&amp;2 / Casque : Voie 3&amp;4</div><div class="a" style="right:0;top:0;width:12.5px;height:100%;background:linear-gradient(#7eaeea 0,#8fc0f5 30%,#5aa5ef 52%,#8fd2fb 100%);border-left:1px solid #6c8fc8"></div><div class="a" style="left:313.3px;top:1.9px;width:3.4px;height:2.6px;background:#000;clip-path:polygon(0 100%,100% 100%,50% 0)"></div><div class="a" style="left:313.3px;top:6.3px;width:3.4px;height:2.6px;background:#000;clip-path:polygon(0 0,100% 0,50% 100%)"></div></div>
<div class="a" style="left:241.5px;top:264.5px;width:50px;height:12.5px;border:1px solid #777;border-radius:6.5px;background:linear-gradient(#fff,#eee 50%,#e0e0e0 52%,#f6f6f6);box-shadow:0 1px 1px rgba(0,0,0,.3)"></div>
<div class="t" style="left:249px;top:264.5px;font-size:8.2px;color:#111">Appliquer</div>
<div class="a" style="left:430px;top:305px;width:63px;height:13.5px;border:1px solid #4a5aa0;border-radius:7px;background:linear-gradient(#dcecfc 0,#a4ccf6 35%,#70b2f2 55%,#a8e0ff 100%);box-shadow:0 1px 1.5px rgba(0,0,0,.4)"></div>
<div class="t" style="left:455.8px;top:308.2px;font-size:7.9px;color:#111">OK</div>
</div>
<div class="a" style="left:237.2px;top:163.7px;width:115.5px;height:109.7px;background:#fdfdfd;border-radius:3px;box-shadow:0 2px 8px rgba(0,0,0,.45),0 0 0 .5px rgba(0,0,0,.25)">
<div class="mi" style="top:3.3px"></div>
<div class="mi" style="top:29.5px"></div>
<div class="mi" style="top:56px"></div>
<div class="mi" style="top:82.3px"></div>
<svg class="a" style="left:3.8px;top:12.3px" width="6.2" height="6.6" viewBox="0 0 12 14"><path d="M1 8l3.5 4.5L11 1" fill="none" stroke="#444" stroke-width="2.6"/></svg>
<div class="blk" style="left:16.2px;top:9.3px;width:42px;font-size:6px;line-height:6.8px;-webkit-text-stroke:.5px #111;letter-spacing:.5px">Hercules<br>DJ4Set</div>
<svg class="a" style="left:67.8px;top:4.2px" width="29.6" height="21.2" viewBox="0 0 32 22" preserveAspectRatio="none"><path d="M1.5 .5h29l1 2v17l-1 2h-29l-1-2v-17z" fill="#2a2c30" stroke="#15161a" stroke-width=".8"/><rect x="2" y="1.5" width="28" height="6.5" fill="#34363a"/><rect x="5.3" y="3" width="6" height="4.3" fill="#e0e0e0"/><path d="M7.3 2.5v5.5M9.3 2.5v5.5" stroke="#555" stroke-width=".7"/><rect x="20.7" y="3" width="6" height="4.3" fill="#e0e0e0"/><path d="M22.7 2.5v5.5M24.7 2.5v5.5" stroke="#555" stroke-width=".7"/><rect x="14" y="3.3" width="4" height="3.5" fill="#8a8c90"/><path d="M5 9h7M20 9h7M14 8.5h4" stroke="#b8b8b8" stroke-width=".9" stroke-dasharray="1.4 .7"/><rect x="13.3" y="9.5" width="5.4" height="11.5" fill="#383a3e"/><path d="M15 12v7M17 12v7" stroke="#888" stroke-width=".7"/><rect x="15.2" y="16.5" width="1.6" height="2.5" fill="#aaa"/><circle cx="7.3" cy="14.8" r="4.7" fill="#1a1c20" stroke="#6a6e74" stroke-width="1.1"/><circle cx="7.3" cy="14.8" r="2.2" fill="#4a4e54"/><circle cx="24.7" cy="14.8" r="4.7" fill="#1a1c20" stroke="#6a6e74" stroke-width="1.1"/><circle cx="24.7" cy="14.8" r="2.2" fill="#4a4e54"/><path d="M1.5 19.5l2 1.5M30.5 19.5l-2 1.5M1.5 2.5l2-1.5M30.5 2.5l-2-1.5" stroke="#c8c8c8" stroke-width=".9"/></svg>
<div class="blk" style="left:12px;top:37.2px;width:46px;font-size:5.7px;line-height:6.8px;-webkit-text-stroke:.5px #111;letter-spacing:.55px">MONO<br>SEPARATED</div>
<svg class="a" style="left:48px;top:29px" width="56" height="25" viewBox="0 0 56 25"><path d="M14 3.6L24 3.3C29.5 3.2 27 6 20 6.5C12 7 4 7.5 5.5 9C7 10.5 16 10.6 23.5 10.6" fill="none" stroke="#5a5a5a" stroke-width="1"/><path d="M7 9.8C10 12.5 17 14.5 23.5 16.8" fill="none" stroke="#5a5a5a" stroke-width="1"/><path d="M3 3.3L14.2 3.7" stroke="#1e1e1e" stroke-width="2.2"/><path d="M.6 3.2L3.2 3.3" stroke="#9a9a9a" stroke-width="1.3"/><path d="M23.5 10.6h12.5" stroke="#909090" stroke-width="3.8"/><path d="M23.8 10.5h12" stroke="#f6f6f6" stroke-width="2.6"/><path d="M36 10.6h4" stroke="#8a8a8a" stroke-width="1.7"/><path d="M23.5 16.8L36.5 19.7" stroke="#c41c1c" stroke-width="3.6"/><path d="M24 16.2L36.5 19" stroke="#ee5a50" stroke-width="1"/><path d="M36.5 19.7l4 .8" stroke="#8a8a8a" stroke-width="1.7"/><text x="41.6" y="13" font-family="Liberation Sans" font-size="3.7" font-weight="bold" fill="#000">OUT1</text><text x="41.6" y="21.4" font-family="Liberation Sans" font-size="3.7" font-weight="bold" fill="#000">OUT2</text></svg>
<div class="blk" style="left:17.3px;top:65.9px;font-size:5.7px;-webkit-text-stroke:.5px #111;letter-spacing:.55px">2 CARDS</div>
<svg class="a" style="left:48px;top:57px" width="56" height="23" viewBox="0 0 56 23"><path d="M2.5 11.5L13.5 5L19.8 7.5L8.5 14Z" fill="#efeff4"/><path d="M2.5 11.5L8.5 14V17.2L2.5 15Z" fill="#a8a8b2"/><path d="M8.5 14L19.8 7.5V12.2L8.5 17.2Z" fill="#cfcfd8"/><path d="M2.5 11.5L13.5 5L19.8 7.5V12.2L8.5 17.2L2.5 15Z" fill="none" stroke="#9a9aa4" stroke-width=".5"/><circle cx="14.5" cy="8.3" r="1.15" fill="#c8a030"/><path d="M4 13.3l3 1.2" stroke="#555" stroke-width="1"/><path d="M27 6v10M22 11h10" stroke="#333" stroke-width="2.5"/><path d="M33.5 6.5L37 4.3L39.5 6.5L36 9Z" fill="#caa344"/><path d="M35 8.7L39.5 5.7L53.6 14.8V17.6L49 20.3L35 11.2Z" fill="#171717"/><path d="M35 8.7L49 17.8L53.6 14.8" fill="none" stroke="#3a3a3a" stroke-width=".6"/><path d="M42 10L44.6 8.3L46.7 10L44.2 11.9Z" fill="#e42a2a"/><circle cx="51.3" cy="14.5" r=".7" fill="#3c3"/></svg>
<div class="blk" style="left:14.5px;top:88.9px;width:34px;font-size:5.7px;line-height:7.1px;-webkit-text-stroke:.5px #111;letter-spacing:.55px">4-OUT<br>CARD</div>
<svg class="a" style="left:56px;top:82px" width="34" height="24" viewBox="0 0 34 24"><path d="M2.2 8.6L8.3 2.1L13.3 4.1L7.4 9.6Z" fill="#262b1f"/><path d="M8.9 9.3L15 2.8L20 4.8L14.1 10.3Z" fill="#262b1f"/><path d="M14.6 10.9L20.7 4.4L25.7 6.4L19.8 11.9Z" fill="#262b1f"/><path d="M19.9 12.6L26 6.1L31 8.1L25.1 13.6Z" fill="#262b1f"/><path d="M2.9 15.3L9 8.8L14 10.8L8.1 16.3Z" fill="#262b1f"/><path d="M8.9 16.6L15 10.1L20 12.1L14.1 17.6Z" fill="#262b1f"/><path d="M14.6 18.3L20.7 11.8L25.7 13.8L19.8 19.3Z" fill="#262b1f"/><path d="M20.2 20L26.3 13.5L31.3 15.5L25.4 21Z" fill="#262b1f"/><circle cx="4.8" cy="8.6" r="2.9" fill="#e0b848" stroke="#8a6a18" stroke-width=".6"/><circle cx="4.5" cy="8.3" r="1.5" fill="#f4dc88"/><circle cx="4.8" cy="8.6" r=".8" fill="#7a5a14"/><circle cx="11.5" cy="9.3" r="2.9" fill="#e0b848" stroke="#8a6a18" stroke-width=".6"/><circle cx="11.2" cy="9" r="1.5" fill="#f4dc88"/><circle cx="11.5" cy="9.3" r=".8" fill="#7a5a14"/><circle cx="17.2" cy="10.9" r="2.9" fill="#e0b848" stroke="#8a6a18" stroke-width=".6"/><circle cx="16.9" cy="10.6" r="1.5" fill="#f4dc88"/><circle cx="17.2" cy="10.9" r=".8" fill="#7a5a14"/><circle cx="22.5" cy="12.6" r="2.9" fill="#e0b848" stroke="#8a6a18" stroke-width=".6"/><circle cx="22.2" cy="12.3" r="1.5" fill="#f4dc88"/><circle cx="22.5" cy="12.6" r=".8" fill="#7a5a14"/><circle cx="5.5" cy="15.3" r="2.9" fill="#e0b848" stroke="#8a6a18" stroke-width=".6"/><circle cx="5.2" cy="15" r="1.5" fill="#f4dc88"/><circle cx="5.5" cy="15.3" r=".8" fill="#7a5a14"/><circle cx="11.5" cy="16.6" r="2.9" fill="#e0b848" stroke="#8a6a18" stroke-width=".6"/><circle cx="11.2" cy="16.3" r="1.5" fill="#f4dc88"/><circle cx="11.5" cy="16.6" r=".8" fill="#7a5a14"/><circle cx="17.2" cy="18.3" r="2.9" fill="#e0b848" stroke="#8a6a18" stroke-width=".6"/><circle cx="16.9" cy="18" r="1.5" fill="#f4dc88"/><circle cx="17.2" cy="18.3" r=".8" fill="#7a5a14"/><circle cx="22.8" cy="20" r="2.9" fill="#e0b848" stroke="#8a6a18" stroke-width=".6"/><circle cx="22.5" cy="19.7" r="1.5" fill="#f4dc88"/><circle cx="22.8" cy="20" r=".8" fill="#7a5a14"/></svg>
</div>
<svg class="a" style="left:236px;top:164px" width="8" height="12" viewBox="0 0 16 24"><path d="M1 1v17l4-4 3 7 3-1.5-3-6.5h6z" fill="#111" stroke="#fff" stroke-width="1.4"/></svg>
</div></body></html>
